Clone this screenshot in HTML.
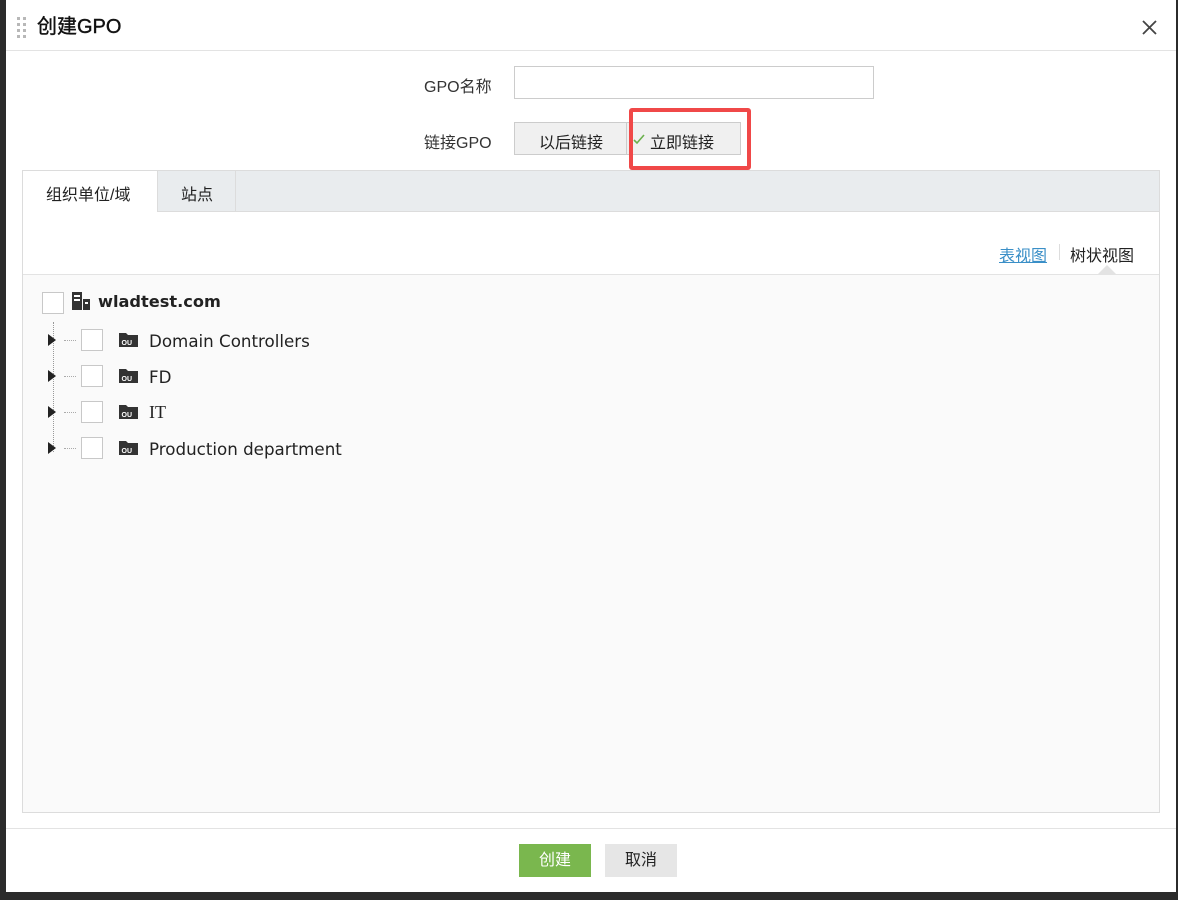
<!DOCTYPE html>
<html><head><meta charset="utf-8"><style>
*{box-sizing:border-box;margin:0;padding:0}
body{width:1178px;height:900px;background:#2b2b2b;position:relative;overflow:hidden;font-family:"Liberation Sans","Noto Sans CJK SC",sans-serif;color:#222}
.modal{position:absolute;left:6px;top:0;width:1170px;height:892px;background:#fff}
.abs{position:absolute}
.hdr{left:0;top:0;width:1170px;height:51px;border-bottom:1px solid #e3e3e3}
.title{left:31px;top:10px;font-size:20px;color:#111;-webkit-text-stroke:0.4px #111}
.lbl{font-size:16px;color:#333}
.cb{position:absolute;width:22px;height:22px;border:1px solid #c8c8c8;background:#fff}
.row{position:absolute;font-size:16.7px;color:#222;font-family:"DejaVu Sans",sans-serif}
.ou{position:absolute;width:19px;height:15px}
</style></head><body>
<div class="modal">
<div class="abs hdr"></div>
<svg class="abs" style="left:10px;top:16px" width="12" height="22"><g fill="#b8b8b8"><rect x="1" y="1" width="3" height="3"/><rect x="7" y="1" width="3" height="3"/><rect x="1" y="7" width="3" height="3"/><rect x="7" y="7" width="3" height="3"/><rect x="1" y="13" width="3" height="3"/><rect x="7" y="13" width="3" height="3"/><rect x="1" y="19" width="3" height="3"/><rect x="7" y="19" width="3" height="3"/></g></svg>
<div class="abs title">创建GPO</div>
<svg class="abs" style="left:1136px;top:20px" width="15" height="15"><path d="M1 1L14 14M14 1L1 14" stroke="#444" stroke-width="1.8"/></svg>

<div class="abs lbl" style="left:418px;top:73px">GPO名称</div>
<div class="abs" style="left:508px;top:66px;width:360px;height:33px;border:1px solid #ccc"></div>
<div class="abs lbl" style="left:418px;top:129px">链接GPO</div>
<div class="abs" style="left:508px;top:122px;width:227px;height:33px;border:1px solid #ccc;background:#f0f0f0"></div>
<div class="abs" style="left:620px;top:122px;width:1px;height:33px;background:#ccc"></div>
<div class="abs lbl" style="left:533px;top:129px;color:#222">以后链接</div>
<svg class="abs" style="left:627px;top:133px" width="12" height="12"><path d="M1 7L4 10L11 2" stroke="#6ab04c" stroke-width="1.6" fill="none"/></svg>
<div class="abs lbl" style="left:644px;top:129px;color:#222">立即链接</div>
<div class="abs" style="left:623px;top:108px;width:122px;height:62px;border:4px solid #f04848;border-radius:3px"></div>

<div class="abs" style="left:16px;top:170px;width:1138px;height:643px;border:1px solid #dcdcdc;background:#fafafa"></div>
<div class="abs" style="left:17px;top:171px;width:1136px;height:41px;background:#e9ecee;border-bottom:1px solid #dcdcdc"></div>
<div class="abs" style="left:17px;top:171px;width:135px;height:41px;background:#fff;border-right:1px solid #dcdcdc"></div>
<div class="abs" style="left:152px;top:171px;width:78px;height:40px;border-right:1px solid #dcdcdc"></div>
<div class="abs lbl" style="left:40px;top:181px;color:#222">组织单位/域</div>
<div class="abs lbl" style="left:175px;top:181px;color:#222">站点</div>
<div class="abs" style="left:17px;top:212px;width:1136px;height:63px;background:#fff;border-bottom:1px solid #e3e3e3"></div>
<div class="abs lbl" style="left:993px;top:242px;color:#3a8fc7;text-decoration:underline">表视图</div>
<div class="abs" style="left:1053px;top:244px;width:1px;height:16px;background:#ddd"></div>
<div class="abs lbl" style="left:1064px;top:242px;color:#222">树状视图</div>
<div class="abs" style="left:1092px;top:265px;width:0;height:0;border-left:9px solid transparent;border-right:9px solid transparent;border-bottom:9px solid #e3e3e3"></div>

<div class="cb" style="left:36px;top:292px"></div>
<svg class="abs" style="left:66px;top:292px" width="20" height="18"><rect x="0" y="0" width="10" height="18" fill="#333"/><rect x="2" y="3" width="6" height="2" fill="#fff"/><rect x="2" y="7" width="6" height="2" fill="#fff"/><rect x="11" y="7" width="7" height="11" fill="#333"/><rect x="13" y="10" width="3" height="2" fill="#fff"/></svg>
<div class="row" style="left:92px;top:292px;font-weight:bold;font-size:16.2px">wladtest.com</div>
<div class="abs" style="left:47px;top:322px;width:0;height:130px;border-left:1px dotted #999"></div>

<div class="abs" style="left:42px;top:334px;border-left:8px solid #222;border-top:6px solid transparent;border-bottom:6px solid transparent"></div>
<div class="abs" style="left:58px;top:340px;width:12px;border-top:1px dotted #aaa"></div>
<div class="cb" style="left:75px;top:329px"></div>
<svg class="ou" style="left:113px;top:332px"><path d="M0 1h7l2 2h10v12H0z" fill="#333"/><text x="2.5" y="13" font-size="7" font-family="Liberation Sans" font-weight="bold" fill="#fff">OU</text></svg>
<div class="row" style="left:143px;top:331px">Domain Controllers</div>

<div class="abs" style="left:42px;top:370px;border-left:8px solid #222;border-top:6px solid transparent;border-bottom:6px solid transparent"></div>
<div class="abs" style="left:58px;top:376px;width:12px;border-top:1px dotted #aaa"></div>
<div class="cb" style="left:75px;top:365px"></div>
<svg class="ou" style="left:113px;top:368px"><path d="M0 1h7l2 2h10v12H0z" fill="#333"/><text x="2.5" y="13" font-size="7" font-family="Liberation Sans" font-weight="bold" fill="#fff">OU</text></svg>
<div class="row" style="left:143px;top:367px">FD</div>

<div class="abs" style="left:42px;top:406px;border-left:8px solid #222;border-top:6px solid transparent;border-bottom:6px solid transparent"></div>
<div class="abs" style="left:58px;top:412px;width:12px;border-top:1px dotted #aaa"></div>
<div class="cb" style="left:75px;top:401px"></div>
<svg class="ou" style="left:113px;top:404px"><path d="M0 1h7l2 2h10v12H0z" fill="#333"/><text x="2.5" y="13" font-size="7" font-family="Liberation Sans" font-weight="bold" fill="#fff">OU</text></svg>
<div class="row" style="left:143px;top:402px;font-family:'Liberation Serif',serif;font-size:18px">IT</div>

<div class="abs" style="left:42px;top:442px;border-left:8px solid #222;border-top:6px solid transparent;border-bottom:6px solid transparent"></div>
<div class="abs" style="left:58px;top:448px;width:12px;border-top:1px dotted #aaa"></div>
<div class="cb" style="left:75px;top:437px"></div>
<svg class="ou" style="left:113px;top:440px"><path d="M0 1h7l2 2h10v12H0z" fill="#333"/><text x="2.5" y="13" font-size="7" font-family="Liberation Sans" font-weight="bold" fill="#fff">OU</text></svg>
<div class="row" style="left:143px;top:439px">Production department</div>

<div class="abs" style="left:0;top:828px;width:1170px;height:1px;background:#e3e3e3"></div>
<div class="abs" style="left:513px;top:844px;width:72px;height:33px;background:#7ab74e;color:#fff;font-size:16px;text-align:center;line-height:33px">创建</div>
<div class="abs" style="left:599px;top:844px;width:72px;height:33px;background:#e6e6e6;color:#222;font-size:16px;text-align:center;line-height:33px">取消</div>
</div>
</body></html>
